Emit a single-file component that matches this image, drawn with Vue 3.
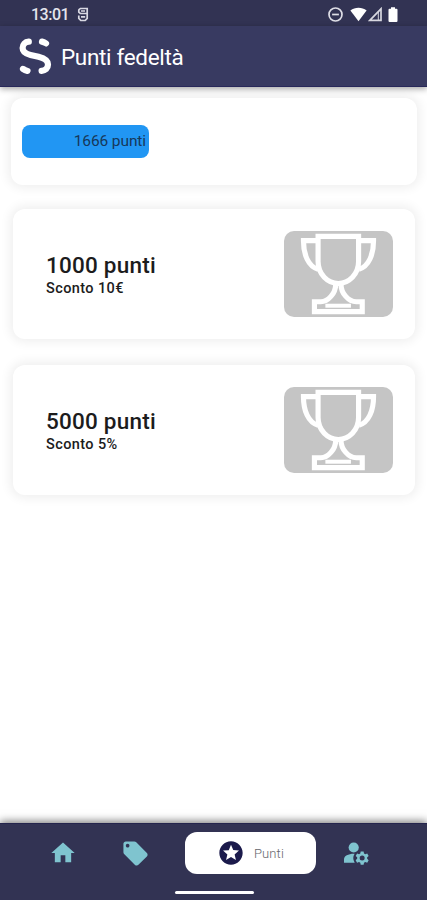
<template>
  <div class="screen">
    <div class="status-bar">
      <span class="clock">13:01</span>
      <svg class="status-app" width="12" height="15" viewBox="0 0 12 15" fill="none" stroke="#d8d8e2" stroke-width="1.7">
        <path d="M3 1.500h7.200v9.800l-2 2.200H3.800l-2-2.200V8.500" />
        <path d="M3 1.500L1.800 3v2.200l1.500 1.300h6.900M4 4h4M4 9.900h4.200" />
      </svg>
      <div class="status-icons">
        <svg width="16" height="16" viewBox="0 0 16 16" fill="none" stroke="#dedee6" stroke-width="1.7">
          <circle cx="7.500" cy="7.500" r="6.500" />
          <path d="M4.100 7.500h6.800" />
        </svg>
        <svg class="wifi" width="17" height="15" viewBox="0 0 17 15" fill="#fff">
          <path d="M.4 3.6C5 -.1 12 -.1 16.600 3.600L8.500 14.200Z" />
        </svg>
        <svg class="signal" width="15" height="15" viewBox="0 0 15 15" fill="none" stroke="#d8d8e0" stroke-width="1.700">
          <path d="M13 1.800v11.500H1.800Z" />
          <path d="M10.300 5v8" stroke-width="1" />
        </svg>
        <svg class="battery" width="10" height="16" viewBox="0 0 10 16" fill="#fff">
          <path d="M3 .3h4v1.500h1.500q1 0 1 1v11q0 1.300-1 1.300h-7q-1 0-1-1.300V2.800q0-1 1-1H3Z" />
        </svg>
      </div>
    </div>

    <header class="app-bar">
      <svg class="logo" width="34" height="38" viewBox="0 0 34 38" fill="none" stroke="#fff" stroke-width="6.2" stroke-linecap="round">
        <path d="M10.800 4.700C7 5 4.600 7.500 4.600 11C4.600 15.300 8.200 16.900 12.500 17.900L20.500 19.800C27 21.500 30 23.700 30 27.500C30 31.300 27.300 33.500 23.600 33.800" />
        <path d="M24 4.600q2.300.5 4 1.800" />
        <path d="M5 31.900q2 1.400 4.500 2" />
      </svg>
      <h1>Punti fedeltà</h1>
    </header>

    <main class="content">
      <section class="card balance">
        <div class="progress">{{ points }} punti</div>
      </section>

      <section v-for="reward in rewards" :key="reward.points" class="card reward">
        <div class="reward-text">
          <h2>{{ reward.points }} punti</h2>
          <p>{{ reward.discount }}</p>
        </div>
        <div class="trophy">
          <svg viewBox="0 0 327 259" fill="none" stroke="#fff" stroke-width="15.5">
            <path d="M102 16H224V92C224 130 195 158 163 158C131 158 102 130 102 92Z" />
            <path d="M102 29H58C58 70 72 107 102 115M225 29H269C269 70 255 107 225 115" />
            <path d="M155 160C155 188 132 213 110 213H91V243H235V213H217C194 213 171 188 171 160" />
            <path d="M124 225H201" stroke-width="12" />
          </svg>
        </div>
      </section>
    </main>

    <nav class="bottom-nav">
      <a class="nav-item home" aria-label="Home">
        <svg width="28" height="28" viewBox="0 0 24 24" fill="currentColor"><path d="M10 20v-6h4v6h5v-8h3L12 3 2 12h3v8z" /></svg>
      </a>
      <a class="nav-item offers" aria-label="Offerte">
        <svg width="29" height="29" viewBox="0 0 24 24" fill="currentColor"><path d="M21.410 11.580l-9-9C12.050 2.220 11.550 2 11 2H4c-1.100 0-2 .9-2 2v7c0 .55.220 1.050.590 1.420l9 9c.360.360.860.580 1.410.580s1.050-.220 1.410-.590l7-7c.370-.360.590-.860.590-1.410s-.230-1.060-.590-1.420zM5.500 7C4.670 7 4 6.330 4 5.500S4.670 4 5.500 4 7 4.670 7 5.500 6.330 7 5.500 7z" /></svg>
      </a>
      <a class="nav-item active">
        <svg width="28" height="28" viewBox="0 0 24 24" fill="currentColor"><path d="M11.990 2C6.470 2 2 6.480 2 12s4.470 10 9.990 10C17.520 22 22 17.520 22 12S17.520 2 11.990 2zm4.240 16L12 15.450 7.770 18l1.120-4.810-3.730-3.230 4.920-.420L12 5l1.920 4.530 4.920.420-3.730 3.230L16.230 18z" /></svg>
        <span>Punti</span>
      </a>
      <a class="nav-item account" aria-label="Account">
        <svg width="28" height="28" viewBox="0 0 28 28" fill="currentColor">
          <circle cx="11.700" cy="8.500" r="5.100" />
          <path d="M12 14.800C6.200 14.800 2 17 2 20.500V23.700H12.700Q9.800 19.300 12.600 14.800Z" />
          <path fill-rule="evenodd" d="M18.700 12.400h2.900l.4 2 1.300.75 1.900-.65 1.450 2.500-1.500 1.350v1.500l1.500 1.350-1.450 2.500-1.900-.65-1.300.75-.4 2h-2.900l-.4-2-1.300-.75-1.900.65-1.450-2.500 1.500-1.350v-1.500l-1.500-1.350 1.450-2.500 1.900.65 1.300-.75ZM20.150 16.600a2.500 2.500 0 1 0 0 5a2.500 2.500 0 1 0 0-5Z" />
        </svg>
      </a>
      <div class="home-indicator"></div>
    </nav>
  </div>
</template>

<script setup>
import { ref } from 'vue';

const points = ref(1666);

const rewards = ref([
  { points: 1000, discount: 'Sconto 10€' },
  { points: 5000, discount: 'Sconto 5%' },
]);
</script>

<style>
body {
  margin: 0;
  background: #fff;
}
</style>

<style scoped>
.screen {
  display: flex;
  flex-direction: column;
  height: 900px;
  overflow: hidden;
  background: #fff;
  color: #1c1c1c;
  font-family: Roboto, "Liberation Sans", sans-serif;
}

.status-bar {
  display: flex;
  align-items: center;
  flex: none;
  box-sizing: border-box;
  height: 26px;
  padding: 3px 29px 0 31px;
  background: #323353;
  color: #e4e4ec;
}

.clock {
  width: 39px;
  font-size: 16px;
  font-weight: 500;
  letter-spacing: -0.5px;
  line-height: 20px;
}

.status-app {
  margin-left: 7px;
}

.status-icons {
  display: flex;
  align-items: center;
  margin-left: auto;
}

.wifi {
  margin-left: 6px;
}

.signal {
  margin-left: 1px;
}

.battery {
  margin-left: 5px;
}

.app-bar {
  display: flex;
  align-items: center;
  flex: none;
  box-sizing: border-box;
  height: 61px;
  padding: 0 18px 1px;
  background: #383a61;
  border-bottom: 1px solid #28285a;
  box-shadow: 0 2px 6px rgba(0, 0, 0, 0.35);
  z-index: 1;
}

.logo {
  flex: none;
}

.app-bar h1 {
  margin: 3px 0 0 9px;
  color: #fff;
  font-size: 22.5px;
  font-weight: 400;
  letter-spacing: -0.33px;
  line-height: 28px;
}

.content {
  display: flex;
  flex: 1;
  flex-direction: column;
  padding: 11px 12px 0 13px;
}

.card {
  box-sizing: border-box;
  border-radius: 12px;
  background: #fff;
  box-shadow: 0 0 11px 3px rgba(0, 0, 0, 0.065);
}

.balance {
  height: 87px;
  margin: 0 -2px 24px;
  padding: 27px 11px;
}

/* Barra con il saldo punti */
.progress {
  box-sizing: border-box;
  width: 127px;
  height: 33px;
  padding-right: 3px;
  border-radius: 8px;
  background: #2196f3;
  color: #17385a;
  font-size: 15.5px;
  letter-spacing: -0.1px;
  line-height: 33px;
  text-align: right;
}

.reward {
  display: flex;
  align-items: center;
  justify-content: space-between;
  height: 130px;
  margin-bottom: 26px;
  padding: 0 22px 0 33px;
}

.reward-text {
  padding-top: 2px;
}

.reward h2 {
  margin: 0;
  font-size: 22.5px;
  font-weight: 500;
  letter-spacing: 0.22px;
  line-height: 26px;
}

.reward p {
  margin: 1px 0 0;
  font-size: 14.5px;
  font-weight: 500;
  letter-spacing: 0.4px;
  line-height: 20px;
}

.trophy {
  width: 109px;
  height: 86px;
  border-radius: 10px;
  background: #c5c5c5;
}

.trophy svg {
  display: block;
  width: 109px;
  height: 86px;
}

.bottom-nav {
  position: relative;
  display: flex;
  flex: none;
  align-items: center;
  box-sizing: border-box;
  height: 77px;
  padding: 0 54px 18px 49px;
  background: #323353;
  border-top: 1px solid #25254d;
  box-shadow: 0 -2px 8px rgba(0, 0, 0, 0.5);
}

.nav-item {
  display: flex;
  flex: none;
  align-items: center;
  color: #7fc4cf;
}

.offers {
  margin-left: 44px;
}

.active {
  box-sizing: border-box;
  width: 131px;
  height: 42px;
  margin-left: 35px;
  padding-left: 32px;
  border-radius: 12px;
  background: #fff;
  color: #1b1a4b;
}

.active span {
  margin-left: 9px;
  color: #66666c;
  font-size: 13px;
  font-weight: 300;
  letter-spacing: 0.1px;
}

.account {
  margin-left: 26px;
}

.home-indicator {
  position: absolute;
  bottom: 6px;
  left: 175px;
  width: 79px;
  height: 3px;
  border-radius: 2px;
  background: #fff;
}
</style>
